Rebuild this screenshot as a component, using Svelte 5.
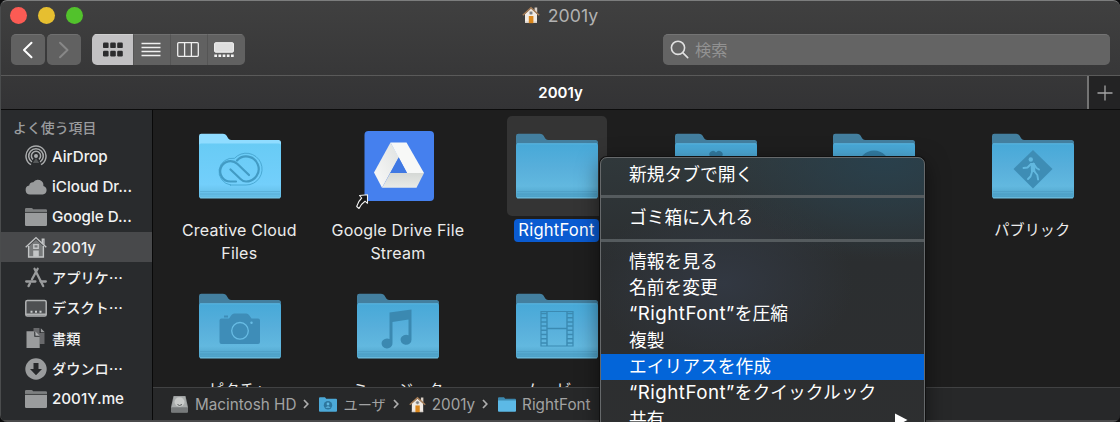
<script>
  const sidebar = [
    { icon: 'airdrop', name: 'AirDrop' },
    { icon: 'cloud', name: 'iCloud Dr...' },
    { icon: 'folder', name: 'Google D...' },
    { icon: 'home', name: '2001y', active: true },
    { icon: 'apps', name: 'アプリケ…', ja: true },
    { icon: 'desktop', name: 'デスクト…', ja: true },
    { icon: 'docs', name: '書類', ja: true },
    { icon: 'download', name: 'ダウンロ…', ja: true },
    { icon: 'folder', name: '2001Y.me' }
  ];
  const items = [
    { kind: 'cc', name: 'Creative Cloud Files' },
    { kind: 'drive', name: 'Google Drive File Stream' },
    { kind: 'plain', name: 'RightFont', selected: true },
    { kind: 'heart', name: '' },
    { kind: 'globe', name: '' },
    { kind: 'public', name: 'パブリック', ja: true },
    { kind: 'camera', name: 'ピクチャ', ja: true },
    { kind: 'music', name: 'ミュージック', ja: true },
    { kind: 'film', name: 'ムービー', ja: true }
  ];
  const menu = [
    [{ text: '新規タブで開く' }],
    [{ text: 'ゴミ箱に入れる' }],
    [
      { text: '情報を見る' },
      { text: '名前を変更' },
      { target: '“RightFont”', text: 'を圧縮' },
      { text: '複製' },
      { text: 'エイリアスを作成', hot: true },
      { target: '“RightFont”', text: 'をクイックルック' },
      { text: '共有', submenu: true }
    ]
  ];
  const filmHoles = [0, 1, 2, 3, 4, 5, 6, 7];
</script>

{#snippet house(size)}
  <svg width={size} height={size} viewBox="0 0 18 18">
    <path d="M12.600 1.600h2.600v5h-2.600z" fill="#d9cfc6" />
    <path d="M3 8 9 2.600 15 8v9H3z" fill="#f1ebe4" />
    <path d="M3 15.500h4v1.600H3zM11.500 15.500h3.500v1.600h-3.500z" fill="#d6d0ca" />
    <path d="M.8 9.200 9 1.800l8.200 7.400" fill="none" stroke="#a57c56" stroke-width="1.500" />
    <rect x="6.800" y="10" width="4.600" height="7.200" fill="#d9861c" />
    <circle cx="9" cy="7" r="1.700" fill="#777d84" stroke="#c6bdb2" stroke-width=".6" />
  </svg>
{/snippet}

{#snippet chevron()}
  <svg class="chev" width="6" height="10" viewBox="0 0 6 10"><path d="m1 1 3.800 4L1 9" /></svg>
{/snippet}

{#snippet sideIcon(kind)}
  <svg class="side-icon" width="22" height="22" viewBox="0 0 22 22">
    {#if kind === 'airdrop'}
      <g fill="none" stroke="#a9abac" stroke-width="1.500">
        <path d="M6 19.700a10 10 0 1 1 10 0" />
        <path d="M6.900 17a7.300 7.300 0 1 1 8.200 0" />
        <path d="M8 14.400a4.600 4.600 0 1 1 6 0" />
      </g>
      <circle cx="11" cy="11" r="2" fill="#a9abac" />
      <path d="M11 13 7.800 18h6.400z" fill="#a9abac" opacity=".35" />
    {:else if kind === 'cloud'}
      <path d="M5 18.500a4.500 4.500 0 0 1-.8-8.900A3.600 3.600 0 0 1 8.200 6.200a5.600 5.600 0 0 1 10.200 3.700A4.400 4.400 0 0 1 17.700 18.500z" fill="#9a9c9d" />
    {:else if kind === 'folder'}
      <path d="M0 6V3.200Q0 2 1.200 2H6.500q1 0 1.500 1.200H20.800Q22 3.200 22 4.300V6z" fill="#7e8081" />
      <path d="M0 6.800H22V18.800q0 1.200-1.200 1.200H1.200Q0 20 0 18.800z" fill="#9a9c9d" />
      <path d="M0 6.400H22" stroke="#444648" stroke-width=".8" />
    {:else if kind === 'home'}
      <path d="M4 10 11 4l7 6v11H4z" fill="#77797a" />
      <g fill="none" stroke="#c3c5c6" stroke-width="1.400">
        <path d="m.7 11.300 10.300-9.700 10.300 9.700" />
        <path d="M3.600 10v11h14.800V10" />
        <path d="M17.300 7.200V3.300h1.600v5.500" />
        <path d="M8.800 8.600h4.400v3.600H8.800z" />
      </g>
      <path d="M8.200 14.500h5.600v6.200H8.200z" fill="#c3c5c6" />
    {:else if kind === 'apps'}
      <g fill="none" stroke="#9a9c9d" stroke-width="2.300" stroke-linecap="round">
        <path d="m9.500 1.800 8.700 17.200M12.700 1.800 7 12.300M5 16.300l-1.500 2.800" />
        <path d="M1.200 14.500h9.200M15.600 14.500h5.200" />
      </g>
    {:else if kind === 'desktop'}
      <rect x=".8" y="3.400" width="20.400" height="15.600" rx="1.600" fill="#4e5052" stroke="#b1b3b4" stroke-width="1.500" />
      <path d="M1 17.300h20" stroke="#b1b3b4" stroke-width="1.400" />
      <path d="M5.500 13.700h2v2h-2zM10 13.700h2v2h-2zM14.500 13.700h2v2h-2z" fill="#c8cacb" />
    {:else if kind === 'docs'}
      <path d="M8.500 1h6v5h5v11h-5V9L8.500 4z" fill="#68696b" />
      <path d="M15.800 1.200v4h4z" fill="#9a9c9d" />
      <path d="M1.500 4.200h7.800v5.600h5.400V21H1.500z" fill="#9a9c9d" />
      <path d="M10.400 4.400v4.300h4.300z" fill="#b1b3b4" />
    {:else}
      <circle cx="11" cy="11" r="10.700" fill="#9a9c9d" />
      <path d="M8.500 5h5v6h3.500l-6 6.300L5 11h3.500z" fill="#27292b" />
    {/if}
  </svg>
{/snippet}

{#snippet folder(kind)}
  <svg class="folder" width="82" height="66" viewBox="0 0 82 66">
    <defs>
      <linearGradient id="face-{kind}" x1="0" y1="0" x2="0" y2="1">
        {#if kind === 'cc'}
          <stop offset="0" stop-color="#68cbf5" />
          <stop offset=".75" stop-color="#73cffb" />
          <stop offset="1" stop-color="#60b8df" />
        {:else}
          <stop offset="0" stop-color="#47a9d8" />
          <stop offset=".45" stop-color="#58afdb" />
          <stop offset=".78" stop-color="#62b8df" />
          <stop offset="1" stop-color="#4b9fc5" />
        {/if}
      </linearGradient>
    </defs>
    <path d="M0 14V3Q0 .7 2.300 .7H24Q26.500 .7 27.500 2.500L29.300 5.600Q30.200 7 32 7H79.500Q82 7 82 9.500V14z" fill={kind === 'cc' ? '#8fdcff' : '#437f9f'} />
    <path d="M0 12.500Q0 10.500 2 10.500H80Q82 10.500 82 12.500V63.500Q82 65.300 80 65.300H2Q0 65.300 0 63.500z" fill="url(#face-{kind})" />
    {#if kind !== 'cc'}
      <path d="M1 10.800H81" stroke="#62bfe9" stroke-width=".8" />
    {/if}
    <path d="M1 58.500H81M1 61H81" stroke="#3e8bb0" stroke-width=".5" opacity=".6" />
    <path d="M1 64.900H81" stroke="#7fcdec" stroke-width=".9" />
    {#if kind === 'cc'}
      <g fill="none" stroke-linecap="round">
        <path d="M31.500 52H47A15.900 15.900 0 1 0 35.500 25.300A13.400 13.400 0 1 0 31.500 52z" stroke="#46a5cf" stroke-width=".9" />
        <path d="M37 48.500H31.500A10.200 10.200 0 1 1 38.500 31L50 42" stroke="#429bc4" stroke-width="2.200" />
        <path d="M38 27.500A12.500 12.500 0 1 1 47 48.500Q44 48.500 41.500 46L31.500 36.500" stroke="#429bc4" stroke-width="2.200" />
      </g>
    {:else if kind === 'heart'}
      <path d="M41 31l-6-7.500a3.400 3.400 0 0 1 6-4 3.400 3.400 0 0 1 6 4z" fill="#347da4" />
    {:else if kind === 'globe'}
      <circle cx="41" cy="33" r="15.500" fill="#347fa7" />
    {:else if kind === 'public'}
      <path d="M41 17 60.500 36 41 55.500 21.500 36z" fill="#3e8db5" />
      <circle cx="38.800" cy="26.500" r="2.200" fill="#62b8df" />
      <path d="M38.500 30h4l1 9h-4.500z" fill="#62b8df" />
      <path d="m42 38 3.300 4 .8 4.500M40 39l-1.500 4.500-2.500 2.500M39 31l-3.500 3.500-4 .500M41.500 30.500l3 4.500 2.500 1.500" fill="none" stroke="#62b8df" stroke-width="1.900" stroke-linecap="round" stroke-linejoin="round" />
    {:else if kind === 'camera'}
      <path d="M22.500 25.500H30l2.500-3.500q1-1.500 2.800-1.500h12q1.800 0 2.700 1.500l2.500 3.500H59q2 0 2 2V49q0 2-2 2H22.500q-2 0-2-2V27.500q0-2 2-2z" fill="#3e8db8" />
      <path d="M25 23.500h4" stroke="#3e8db8" stroke-width="2" />
      <circle cx="41" cy="37.800" r="8.300" fill="none" stroke="#68bce4" stroke-width="1.300" />
      <circle cx="52.500" cy="29.800" r="1.200" fill="#68bce4" />
    {:else if kind === 'music'}
      <path d="M32.500 19.500 54.500 16.500V46.500A5.500 5 0 1 1 51.500 42.300V26.500L35.500 29V50A5.500 5 0 1 1 32.500 46z" fill="#3b89b1" />
    {:else if kind === 'film'}
      <path d="M25 18.500h32V53H25z" fill="none" stroke="#3b8ab2" stroke-width="1.200" />
      <path d="M31 18.500v34.500M51 18.500v34.500M31 35.500h20" fill="none" stroke="#3b8ab2" stroke-width="1.400" />
      {#each filmHoles as i}
        <path d="M25 {20.500 + i * 4.200}h6M51 {20.500 + i * 4.200}h6" stroke="#3b8ab2" stroke-width="1.500" />
      {/each}
    {/if}
  </svg>
{/snippet}

{#snippet drive()}
  <svg class="drive" width="80" height="80" viewBox="0 0 80 80">
    <defs>
      <linearGradient id="base" x1="0" y1="0" x2="0" y2="1"><stop offset="0" stop-color="#d5d8d5" /><stop offset="1" stop-color="#e9ebe8" /></linearGradient>
      <linearGradient id="left" x1="1" y1="0" x2="0" y2="1"><stop offset="0" stop-color="#dfe2e0" /><stop offset="1" stop-color="#fafafa" /></linearGradient>
    </defs>
    <rect x="9.500" y="1" width="69.500" height="70" rx="4" fill="#4580ee" />
    <path d="M35.500 12.500 19 42.500l8 15.300L43.800 27z" fill="url(#left)" />
    <path d="M35.500 12.500H51.500L69 43H52z" fill="#f7f8f7" />
    <path d="M35.300 43H69L61.500 57.800H27z" fill="url(#base)" />
    <path d="M43.800 27.500 52 43H35.300z" fill="#3f78e3" />
    <path d="M4.500 65.500 12.500 64.800V73.300L10 71.200Q6 74 4 78.500L1.700 76.500Q3 71.500 6.700 68z" fill="#161616" stroke="#f0f0f0" stroke-width="1.100" stroke-linejoin="round" />
  </svg>
{/snippet}

<div class="window">
  <header class="titlebar">
    <div class="lights"><i class="red"></i><i class="yellow"></i><i class="green"></i></div>
    <div class="title">{@render house(18)}<span>2001y</span></div>
    <div></div>
  </header>
  <div class="toolbar">
    <div class="nav">
      <button aria-label="Back"><svg width="12" height="18" viewBox="0 0 12 18"><path d="M9.500 1.800 2 9l7.500 7.200" stroke="#fff" /></svg></button>
      <button aria-label="Forward"><svg width="12" height="18" viewBox="0 0 12 18"><path d="M2 1.800 9.500 9 2 16.200" stroke="#878787" /></svg></button>
    </div>
    <div class="views">
      <button class="on" aria-label="Icons">
        <svg width="20" height="15" viewBox="0 0 20 15" fill="#2c2c2e"><rect width="5.600" height="5.600" y=".5" rx="1.200" /><rect x="7.200" y=".5" width="5.600" height="5.600" rx="1.200" /><rect x="14.200" y=".5" width="5.600" height="5.600" rx="1.200" /><rect y="8.800" width="5.600" height="5.600" rx="1.200" /><rect x="7.200" y="8.800" width="5.600" height="5.600" rx="1.200" /><rect x="14.200" y="8.800" width="5.600" height="5.600" rx="1.200" /></svg>
      </button>
      <button aria-label="List"><svg width="20" height="16" viewBox="0 0 20 16"><path d="M.5 1.500h19M.5 5.500h19M.5 9.500h19M.5 13.500h19" stroke="#efefef" stroke-width="1.300" /></svg></button>
      <button aria-label="Columns"><svg width="22" height="15" viewBox="0 0 22 15"><path d="M1.700.7h18.600q1 0 1 1v11.600q0 1-1 1H1.700q-1 0-1-1V1.700q0-1 1-1zM7.600.7v13.600M14.400.7v13.600" fill="none" stroke="#efefef" stroke-width="1.300" /></svg></button>
      <button aria-label="Gallery"><svg width="20" height="16" viewBox="0 0 20 16"><rect x=".6" y=".7" width="18.800" height="9.500" rx="1" fill="#dedede" stroke="#f4f4f4" /><path d="M.3 13.700h19.500" stroke="#f4f4f4" stroke-width="2.600" stroke-dasharray="2.700 1.480" /></svg></button>
    </div>
    <div class="search">
      <svg width="19" height="19" viewBox="0 0 19 19"><circle cx="8" cy="7.800" r="6.600" /><path d="m12.700 12.600 5 5" /></svg>
      <span>検索</span>
    </div>
  </div>
  <div class="tabs">
    <div class="tab">2001y</div>
    <div class="add"><svg width="16" height="16" viewBox="0 0 16 16"><path d="M8 .5v15M.5 8h15" stroke="#a5a5a5" stroke-width="1.300" /></svg></div>
  </div>
  <div class="body">
    <aside>
      <h2>よく使う項目</h2>
      {#each sidebar as row}
        <div class="side" class:active={row.active} class:ja={row.ja}>
          {@render sideIcon(row.icon)}<span>{row.name}</span>
        </div>
      {/each}
    </aside>
    <main>
      <div class="grid">
        {#each items as item}
          <div class="cell" class:selected={item.selected}>
            <div class="thumb">
              {#if item.kind === 'drive'}{@render drive()}{:else}{@render folder(item.kind)}{/if}
            </div>
            <div class="label" class:ja={item.ja}><span>{item.name}</span></div>
          </div>
        {/each}
      </div>
      <div class="path">
        <svg class="disk" width="17" height="18" viewBox="0 0 17 18">
          <path d="M2.500 1h12L17 12v4.500q0 1-1 1H1q-1 0-1-1V12z" fill="#929596" />
          <path d="M3 1.400h11L16.200 12H.8z" fill="#a9acac" />
          <ellipse cx="8.500" cy="7" rx="5" ry="4.700" fill="#c9cbca" />
          <path d="m6.500 9.500 2 1 2.500-1" stroke="#565a5a" fill="none" />
          <path d="M0 12.500h17v4q0 1-1 1H1q-1 0-1-1z" fill="#777a7b" />
        </svg>
        <span>Macintosh HD</span>
        {@render chevron()}
        <svg width="18" height="15" viewBox="0 0 18 15"><path d="M0 1.200Q0 .3 1 .3h5l1.200 1.500H17q1 0 1 1V14q0 .8-1 .8H1q-1 0-1-.8z" fill="#4ca9d8" /><circle cx="9" cy="8.200" r="4.200" fill="#2d769e" /><circle cx="9" cy="7" r="1.400" fill="#60b9e2" /><path d="M6.300 10.800q2.700-3 5.400 0" fill="#60b9e2" /></svg>
        <span class="users">ユーザ</span>
        {@render chevron()}
        {@render house(17)}
        <span>2001y</span>
        {@render chevron()}
        <svg width="18" height="15" viewBox="0 0 18 15"><path d="M0 1.200Q0 .3 1 .3h5l1.200 1.500H17q1 0 1 1V5H0z" fill="#3c88af" /><path d="M0 3.500h18V14q0 .8-1 .8H1q-1 0-1-.8z" fill="#5cb9e6" /></svg>
        <span>RightFont</span>
      </div>
    </main>
  </div>

  <div class="menu">
    {#each menu as group, g}
      {#if g > 0}<hr />{/if}
      {#each group as entry}
        <div class="entry" class:hot={entry.hot}>
          <div class="text">{#if entry.target}<span class="target">{entry.target}</span>{/if}{entry.text}</div>
          {#if entry.submenu}<svg width="13" height="14" viewBox="0 0 13 14"><path d="M0 .5 12.500 7 0 13.500z" fill="#fff" /></svg>{/if}
        </div>
      {/each}
    {/each}
  </div>
</div>

<style>
  :global(body) { margin: 0; background: #0b0b0c; }
  * { box-sizing: border-box; }
  svg { display: block; flex: none; }
  .window {
    position: relative;
    display: flex;
    flex-direction: column;
    width: 1120px;
    height: 422px;
    overflow: hidden;
    border-radius: 7px;
    border-top: 1px solid #7c7d7d;
    border-left: 1px solid #4a4c4d;
    background: linear-gradient(#404040, #373738 75px, #333335 109px, #1e1e1e 110px);
    color: #fff;
    font-family: Inter, "Noto Sans CJK JP", sans-serif;
  }
  .titlebar {
    display: grid;
    grid-template-columns: 1fr auto 1fr;
    align-items: center;
    height: 30px;
    padding: 0 0 2px 9px;
  }
  .lights { display: flex; gap: 11px; }
  .lights i { width: 17px; height: 17px; border-radius: 50%; }
  .red { background: #fc5b54; }
  .yellow { background: #e6bf30; }
  .green { background: #52c22c; }
  .title { display: flex; align-items: center; gap: 8px; padding-right: 10px; color: #b2b2b2; font-size: 17.700px; }
  .toolbar { display: flex; align-items: center; height: 36px; margin-bottom: 8px; padding: 0 10px; }
  button { display: flex; align-items: center; justify-content: center; height: 31px; padding: 0; border: 0; background: #616161; border-top: 1px solid #707070; }
  .nav { display: flex; gap: 2px; }
  .nav button { width: 34px; border-radius: 5px; }
  .nav path { fill: none; stroke-width: 2; stroke-linecap: round; stroke-linejoin: round; }
  .views { display: flex; margin-left: 11px; border-radius: 5px; overflow: hidden; }
  .views button { width: 37.200px; }
  .views button + button { border-left: 1px solid #555; }
  .views button:last-child { padding-right: 5px; }
  .views .on { width: 41px; background: #c2c1c3; border-top-color: #d0d0d0; }
  .views button:nth-child(2), .views button:nth-child(3) { padding-right: 3px; }
  .search {
    display: flex;
    align-items: center;
    gap: 6px;
    width: 447px;
    height: 31px;
    margin-left: auto;
    padding-left: 7px;
    border-radius: 5px;
    border-top: 1px solid #747474;
    background: #646464;
    color: #929292;
    font-size: 16.300px;
  }
  .search svg { fill: none; stroke: #e0e0e0; stroke-width: 1.600; stroke-linecap: round; }
  .search span { margin-top: -2px; }
  .tabs { display: flex; height: 35px; border-top: 1px solid #5a5a5a; border-bottom: 1px solid #0c0c0c; }
  .tab { display: flex; align-items: center; justify-content: center; width: 1088px; padding-left: 33px; border-right: 2px solid #747474; font-size: 15px; font-weight: 600; }
  .add { display: flex; flex: 1; align-items: center; justify-content: center; background: #232324; }
  .body { display: flex; flex: 1; min-height: 0; border-bottom: 2px solid #4a4a4b; }
  aside { width: 152px; border-right: 1px solid #090909; background: #292b2d; }
  h2 { height: 31px; margin: 0; padding-left: 12px; color: #9a9c9e; font: 500 13.900px/35px "Noto Sans CJK JP", sans-serif; }
  .side { display: flex; align-items: center; gap: 5px; height: 30.350px; padding-left: 24px; font-size: 15.150px; font-weight: 500; color: #f2f2f2; white-space: nowrap; }
  .side.ja { font-family: "Noto Sans CJK JP", sans-serif; font-size: 14.200px; line-height: 20px; }
  .side.ja span { margin-top: -1px; }
  .side.active { background: #48494b; }
  main { display: flex; flex: 1; flex-direction: column; min-width: 0; background: #1e1e1e; }
  .grid { display: grid; flex: 1; grid-template-columns: repeat(6, 158.600px); grid-auto-rows: 160px; min-height: 0; overflow: hidden; padding: 6px 0 0 8px; }
  .cell { display: flex; flex-direction: column; align-items: center; }
  .thumb { display: flex; justify-content: center; width: 100px; height: 100px; padding: 17px 1px 0 0; border-radius: 5px; }
  .selected .thumb { background: #343434; }
  .drive { margin: -3px 6px 0 0; }
  .label { width: 142px; padding: 3px 2px 0 0; color: #ececec; font-size: 16px; line-height: 22.500px; letter-spacing: .2px; text-align: center; }
  .label.ja { font-size: 15.200px; letter-spacing: 0; }
  .label span { display: inline-block; border-radius: 4px; }
  .selected .label { font-size: 16.600px; }
  .selected .label span { padding: 0 4px; background: #0a5bd1; color: #fff; }
  .path { display: flex; align-items: center; height: 33px; flex: none; padding-left: 18px; border-top: 1px solid #414243; background: #272829; color: #a2a3a3; font-size: 15.250px; }
  .path span { margin-left: 6px; white-space: nowrap; }
  .path .disk + span { margin-left: 7px; }
  .path .users { font-size: 14.200px; }
  .chev { margin: 0 10px 0 7px; fill: none; stroke: #adadad; stroke-width: 1.700; }
  .menu {
    position: absolute;
    top: 156px;
    left: 599px;
    width: 325px;
    height: 300px;
    padding-top: 4px;
    border: 1px solid #66696b;
    border-radius: 7px;
    background:
      radial-gradient(ellipse 170px 100px at 88% 0, #29404c, transparent),
      radial-gradient(ellipse 130px 90px at 38% 42%, #323842, transparent),
      linear-gradient(#30383b, #2b2e30 35%, #2e2f30);
    box-shadow: 0 0 0 1px #111, 0 6px 22px #0008;
    font-size: 17.750px;
  }
  .entry { display: flex; align-items: center; justify-content: space-between; height: 26.300px; padding: 0 16px 0 28px; white-space: nowrap; }
  .text { height: 26px; line-height: 26px; }
  .target { font-size: 18.800px; letter-spacing: .45px; }
  .hot { background: #0365d9; }
  hr { height: 3px; margin: 7px 0; border: 0; background: #555b5e; }
</style>
